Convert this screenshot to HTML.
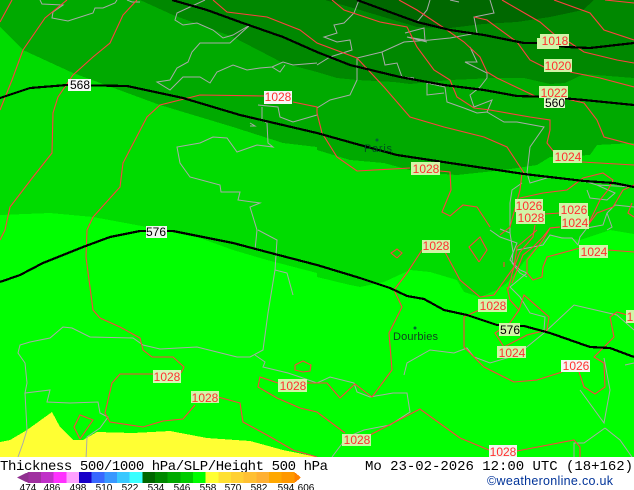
<!DOCTYPE html>
<html><head><meta charset="utf-8"><style>
html,body{margin:0;padding:0;background:#fff;width:634px;height:490px;overflow:hidden}
svg{display:block}
.r polyline{fill:none;stroke:#ff4040;stroke-width:1.1}
.g polyline{fill:none;stroke:#aaa;stroke-width:1}
.k polyline{fill:none;stroke:#000;stroke-width:2.2}
.lb text{font:12px "Liberation Sans",sans-serif;text-anchor:middle;fill:#ff3030}
.lk text{font:12px "Liberation Sans",sans-serif;text-anchor:middle;fill:#000}
.t text{font:14px "Liberation Mono",monospace;fill:#000}
.n text{font:10px "Liberation Sans",sans-serif;text-anchor:middle;fill:#000}
</style></head><body>
<svg width="634" height="490" viewBox="0 0 634 490" xmlns="http://www.w3.org/2000/svg">
<rect width="634" height="490" fill="#fff"/>
<g shape-rendering="crispEdges">
<rect width="634" height="457" fill="#00ff00"/>
<polygon fill="#00dc00" points="0,0 634,0 634,234 610,230 580,240 550,235 533,250 520,267 507,283 497,290 480,297 464,292 457,280 430,272 410,270 384,282 360,287 350,285 317,277 317,273 267,260 233,250 200,238 147,227 93,217 50,213 0,215"/>
<polygon fill="#00aa00" points="0,0 634,0 634,143 597,145 590,155 550,157 537,165 504,170 457,175 417,172 384,163 350,160 317,150 317,147 283,143 233,127 160,105 73,73 23,50 0,27"/>
<polygon fill="#008800" points="140,0 634,0 634,78 584,74 565,83 550,84 524,78 494,78 450,80 410,84 394,82 357,80 337,78 317,72 283,63 233,37 173,15"/>
<polygon fill="#006800" points="325,0 594,0 583,10 550,17 517,22 483,24 450,28 417,27 360,10"/>
<polygon fill="#ffff33" points="0,457 0,442 10,440 27,430 52,412 60,427 73,440 83,440 97,432 133,433 170,431 207,438 250,441 283,450 317,457"/>
</g>
<g class="g">
<polyline points="40,0 42,4 63,5 53,12 52,18 68,21 93,13 95,8 103,8 115,3 117,0"/>
<polyline points="127,0 132,2 140,2"/>
<polyline points="205,0 177,13 175,20 183,25 197,23 213,30 223,38 233,35 250,25 230,43 200,43 192,52 188,62 177,68 170,80 157,82 170,90 183,77 200,77 210,83 217,72 233,65 247,70 260,68 272,67 283,62 293,65 317,63"/>
<polyline points="272,67 280,72 285,65"/>
<polyline points="258,105 278,107 280,117 293,122 317,115"/>
<polyline points="262,107 262,120 267,123 268,143 273,147 257,145 237,152 227,138 213,137 200,143 177,147 180,163 190,177 220,185 221,192 240,192 238,200 260,203 250,207 257,230 255,250"/>
<polyline points="250,123 255,126 250,126"/>
<polyline points="258,230 277,240 275,270 287,273 293,295"/>
<polyline points="275,270 268,313 263,350 250,357 237,357 217,352 197,347 160,349 143,345 133,338 90,337 72,328 63,327 50,338 30,342 20,345 18,353 25,363 27,383 25,393 50,390 47,402 70,403 98,402 100,413 108,417 100,428 87,437 86,460"/>
<polyline points="25,393 27,430 23,443 18,457"/>
<polyline points="255,355 265,362 263,367 288,373 300,377 317,383 330,377 354,383 357,392 370,397 393,393 407,393 410,412 390,425 364,430 347,437 332,457"/>
<polyline points="404,375 407,363 430,350 454,353 467,348 474,357 490,363 517,355 544,333 574,305 617,315 634,330"/>
<polyline points="580,390 604,423 610,390 604,358"/>
<polyline points="605,428 584,443 574,443 574,457"/>
<polyline points="605,428 620,440 634,460"/>
<polyline points="634,363 625,365"/>
<polyline points="490,0 494,13 474,17 477,33 450,38 430,40 404,42 382,52 357,58 357,80 350,95 330,100 317,108"/>
<polyline points="359,0 354,13 344,23 334,25 337,33 324,37 337,42 350,40 352,50 330,57 317,65"/>
<polyline points="470,47 477,62 465,62 487,73 487,78 480,87 470,95 474,107 492,100 487,112 477,113 464,108 447,102 445,87 427,83 427,95 444,93"/>
<polyline points="487,112 504,122 517,122 544,127 530,147 527,173 530,183 550,177 587,182 597,185 634,187"/>
<polyline points="522,183 512,190 510,203 510,233 500,229"/>
<polyline points="510,233 513,252 512,263 520,273 527,277"/>
<polyline points="490,230 500,237 517,243 510,260 520,270 527,273 510,287 520,297 530,313 545,317 544,330"/>
<polyline points="517,250 543,245 550,235 562,238 572,238 578,245 580,237 587,228 603,225 607,213 615,205 634,207"/>
<polyline points="587,190 590,198 607,200 615,193 597,185"/>
<polyline points="607,213 612,227 607,230"/>
<polyline points="405,33 424,28 425,40 407,37 427,42"/>
<polyline points="382,52 385,65 397,63 402,77 414,78"/>
<polyline points="430,0 427,10 417,22"/>
<polyline points="450,0 459,2"/>
</g>
<g class="r">
<polyline points="12,0 0,22"/>
<polyline points="67,0 45,18 23,50 12,80 0,110"/>
<polyline points="137,0 123,15 110,43 93,57 73,75 58,97 53,113 52,153 33,177 10,207 5,230 0,240"/>
<polyline points="87,230 93,217 120,187 123,163 147,117 160,105 200,95 264,96"/>
<polyline points="293,102 317,107 317,113 322,133 337,157 357,171 410,168"/>
<polyline points="87,230 86,257 93,310 100,318 120,327 140,338 143,350 152,357 173,357 184,367 181,373"/>
<polyline points="153,374 120,374 112,383 105,413 110,422 143,427 163,421 183,419 195,405"/>
<polyline points="218,397 240,403 243,422 267,435 293,450 317,457"/>
<polyline points="80,439 74,427 80,415 93,420 80,439"/>
<polyline points="295,365 303,361 311,365 310,371 303,372 295,370 295,365"/>
<polyline points="278,383 260,377 258,387 277,398 300,408 317,412 345,433"/>
<polyline points="307,383 327,383 340,398 355,384 372,397 392,370 389,333 402,307 394,290 407,273 422,250"/>
<polyline points="445,252 460,280 480,297 494,295 514,267 517,247 537,230"/>
<polyline points="370,435 420,409 460,438 489,450"/>
<polyline points="517,451 574,440 580,447 580,457"/>
<polyline points="479,310 464,317 464,347 484,367 514,382 537,380 562,372"/>
<polyline points="579,372 584,387 595,394 605,387 604,363 594,357 614,337 610,317 617,312 634,317"/>
<polyline points="504,327 495,333 504,347 527,335 547,330 549,317 524,295 519,310 507,327"/>
<polyline points="507,287 510,300 519,310"/>
<polyline points="580,248 547,257 543,267 542,277 533,280 527,273 527,260 543,240 550,228 560,227"/>
<polyline points="535,225 533,237 520,252 513,270 508,290"/>
<polyline points="560,227 550,228 543,237 533,247 523,255 517,270 512,283"/>
<polyline points="522,173 520,190 510,227 500,235"/>
<polyline points="520,198 543,193 567,190 583,178 603,173 613,180 608,190 600,200 588,225"/>
<polyline points="634,185 623,190 613,207 597,213 588,225"/>
<polyline points="545,214 560,213"/>
<polyline points="504,262 504,267"/>
<polyline points="632,203 628,213 634,217"/>
<polyline points="608,250 634,252"/>
<polyline points="479,262 469,247 480,237 487,250 479,262"/>
<polyline points="397,258 391,253 397,249 402,253 397,258"/>
<polyline points="332,0 344,10 380,22 407,27 417,47 434,70 450,80 457,97 474,108 490,110 530,117 550,120 550,130 547,143 554,152"/>
<polyline points="582,162 634,165"/>
<polyline points="213,0 227,12 267,17 300,30 317,43 357,58 384,87 410,117 444,127 484,137 507,147 524,173"/>
<polyline points="399,0 417,10 444,28 464,42 480,57 487,72 497,78 537,97"/>
<polyline points="474,17 487,20 517,42 530,60 544,67"/>
<polyline points="502,0 540,22 555,35"/>
<polyline points="569,42 584,52 617,60 634,63"/>
<polyline points="554,0 590,13 604,30 634,40"/>
<polyline points="605,0 634,3"/>
<polyline points="570,72 600,78 634,87"/>
<polyline points="567,99 584,103 597,120 604,137 634,145"/>
<polyline points="440,171 450,172 451,190 442,212 450,216 463,205 477,207 490,227"/>
</g>
<g class="k" shape-rendering="crispEdges">
<polyline points="172,0 207,10 240,22 283,37 317,52 350,65 400,77 444,85 484,90 517,96 550,97 584,100 634,105"/>
<polyline points="357,0 417,22 450,30 484,35 524,43 537,43 567,47 590,48 634,43"/>
<polyline points="0,98 30,88 67,85 127,86 183,98 240,115 317,133 360,145 397,155 450,163 484,168 524,174 584,181 614,183 634,187"/>
<polyline points="0,282 20,275 43,263 83,247 110,237 140,231 173,231 233,243 267,252 317,265 360,278 390,288 407,296 424,299 444,310 467,315 497,325 524,326 550,333 590,347 610,348 634,357"/>
</g>
<circle cx="377" cy="140" r="1.5" fill="#063"/>
<circle cx="415" cy="328" r="1.5" fill="#063"/>
<g font-family="Liberation Sans,sans-serif" font-size="11">
<text x="364" y="152" fill="#005020" textLength="28">Paris</text>
<text x="393" y="340" fill="#104020" textLength="45">Dourbies</text>
</g>
<g shape-rendering="crispEdges" fill="#d2f5a8">
<rect x="537" y="38" width="22" height="11"/><rect x="540" y="34" width="29" height="12"/>
<rect x="544" y="59" width="28" height="13"/><rect x="539" y="86" width="29" height="12"/>
<rect x="553" y="150" width="29" height="13"/><rect x="411" y="162" width="29" height="13"/>
<rect x="515" y="199" width="28" height="13"/><rect x="516" y="211" width="29" height="13"/>
<rect x="559" y="203" width="29" height="13"/><rect x="561" y="216" width="28" height="13"/>
<rect x="422" y="240" width="28" height="13"/><rect x="579" y="245" width="29" height="13"/>
<rect x="478" y="299" width="29" height="13"/><rect x="497" y="346" width="29" height="12"/>
<rect x="626" y="310" width="8" height="13"/>
<rect x="153" y="370" width="28" height="13" fill="#d8f8b8"/><rect x="191" y="391" width="28" height="12"/>
<rect x="278" y="379" width="29" height="13"/><rect x="342" y="434" width="29" height="12"/>
<rect x="544" y="98" width="21" height="10" fill="#e8fcd0"/><rect x="499" y="323" width="21" height="13"/>
<rect x="264" y="91" width="28" height="13" fill="#f6f8f6"/><rect x="68" y="79" width="23" height="12" fill="#f8f8f8"/>
<rect x="146" y="226" width="21" height="12" fill="#f0f4f0"/><rect x="561" y="360" width="29" height="12" fill="#f4f8f4"/>
<rect x="489" y="445" width="28" height="12" fill="#f4f4f0"/>
</g>
<g class="lb">
<text x="555" y="45">1018</text><text x="558" y="70">1020</text><text x="554" y="97">1022</text>
<text x="568" y="161">1024</text><text x="426" y="173">1028</text><text x="529" y="210">1026</text>
<text x="531" y="222">1028</text><text x="574" y="214">1026</text><text x="575" y="227">1024</text>
<text x="436" y="250">1028</text><text x="594" y="256">1024</text><text x="493" y="310">1028</text>
<text x="512" y="357">1024</text><text x="576" y="370">1026</text><text x="278" y="101">1028</text>
<text x="167" y="381">1028</text><text x="205" y="402">1028</text><text x="293" y="390">1028</text>
<text x="357" y="444">1028</text><text x="503" y="456">1028</text><text x="630" y="321">1</text>
</g>
<g class="lk">
<text x="80" y="89">568</text><text x="156" y="236">576</text><text x="555" y="107">560</text><text x="510" y="334">576</text>
</g>
<rect y="457" width="634" height="33" fill="#fff"/>
<g class="t">
<text x="0" y="470" textLength="328" lengthAdjust="spacing">Thickness 500/1000 hPa/SLP/Height 500 hPa</text>
<text x="365" y="470" textLength="268" lengthAdjust="spacing">Mo 23-02-2026 12:00 UTC (18+162)</text>
</g>
<text x="487" y="485" font-family="Liberation Sans,sans-serif" font-size="12.5" fill="#003399" textLength="126" lengthAdjust="spacing">©weatheronline.co.uk</text>
<g shape-rendering="crispEdges">
<polygon points="17,477.5 28.3,472 28.3,483" fill="#903090"/>
<rect x="28.3" y="472" width="12.7" height="11" fill="#a030a0"/>
<rect x="41" y="472" width="12.7" height="11" fill="#c030c8"/>
<rect x="53.7" y="472" width="12.7" height="11" fill="#ff30ff"/>
<rect x="66.3" y="472" width="12.7" height="11" fill="#ffa0ff"/>
<rect x="79" y="472" width="12.7" height="11" fill="#1800c8"/>
<rect x="91.7" y="472" width="12.7" height="11" fill="#3868ff"/>
<rect x="104.3" y="472" width="12.7" height="11" fill="#3898ff"/>
<rect x="117" y="472" width="12.7" height="11" fill="#38c8ff"/>
<rect x="129.7" y="472" width="12.7" height="11" fill="#38ffff"/>
<rect x="142.3" y="472" width="12.7" height="11" fill="#006600"/>
<rect x="155" y="472" width="12.7" height="11" fill="#008800"/>
<rect x="167.7" y="472" width="12.7" height="11" fill="#00aa00"/>
<rect x="180.3" y="472" width="12.7" height="11" fill="#00cc00"/>
<rect x="193" y="472" width="12.7" height="11" fill="#00ff00"/>
<rect x="205.7" y="472" width="12.7" height="11" fill="#ffff33"/>
<rect x="218.3" y="472" width="12.7" height="11" fill="#ffe033"/>
<rect x="231" y="472" width="12.7" height="11" fill="#ffd033"/>
<rect x="243.7" y="472" width="12.7" height="11" fill="#ffc033"/>
<rect x="256.3" y="472" width="12.7" height="11" fill="#ffb033"/>
<rect x="269" y="472" width="12.7" height="11" fill="#ffa800"/>
<rect x="281.7" y="472" width="12.7" height="11" fill="#ff9800"/>
<polygon points="294.3,472 301,477.5 294.3,483" fill="#ff8000"/>
</g>
<g class="n">
<text x="28" y="491">474</text><text x="52" y="491">486</text><text x="78" y="491">498</text><text x="104" y="491">510</text>
<text x="130" y="491">522</text><text x="156" y="491">534</text><text x="182" y="491">546</text><text x="208" y="491">558</text>
<text x="233" y="491">570</text><text x="259" y="491">582</text><text x="286" y="491">594</text><text x="306" y="491">606</text>
</g>
</svg>
</body></html>
